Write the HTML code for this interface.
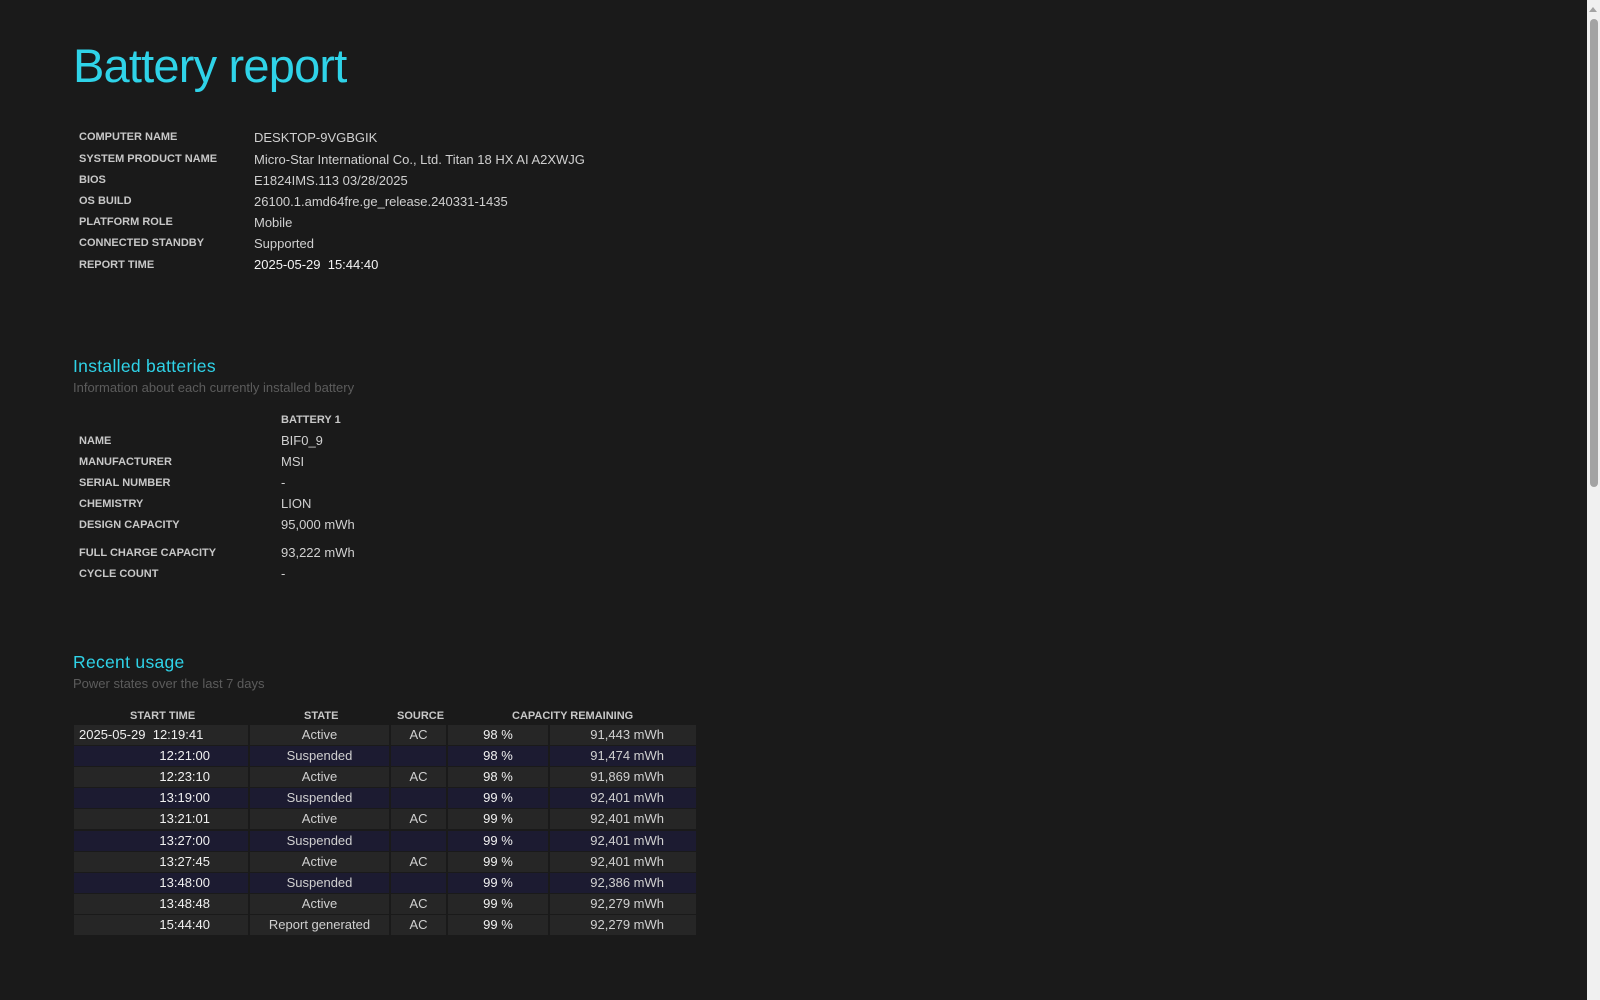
<!DOCTYPE html>
<html><head><meta charset="utf-8"><style>
html,body{margin:0;padding:0;background:#1a1a1a;width:1600px;height:1000px;overflow:hidden;font-family:"Liberation Sans","DejaVu Sans",sans-serif;color:#d8d8d8}
.abs{position:absolute;white-space:nowrap}
h1{position:absolute;left:73px;top:38px;margin:0;font-weight:normal;font-size:47px;color:#2fd3e8;letter-spacing:-0.8px}
.lbl{font-size:11px;font-weight:bold;color:#c8c8c8;text-transform:uppercase}
.val{font-size:13px;color:#d0d0d0}
h2{position:absolute;margin:0;font-weight:normal;font-size:17.5px;color:#2fd3e8;letter-spacing:0.3px}
.sub{font-size:13px;color:#5c5c5c}
.row{position:absolute;left:74px;width:622px;height:20px;font-size:13px;line-height:20px}
.row div{position:absolute;top:0;height:20px;white-space:nowrap;box-sizing:border-box}
.g div{background:#262626}
.n div{background:#1c1b31}
.c1{left:0;width:174px;text-align:right;padding-right:38px;color:#f0f0f0}
.c2{left:176px;width:139px;text-align:center;color:#d0d0d0}
.c3{left:317px;width:55px;text-align:center;color:#d0d0d0}
.c4{left:374px;width:100px;text-align:center;color:#f0f0f0}
.c5{left:476px;width:146px;text-align:right;padding-right:32px;color:#d0d0d0}
.sb{position:absolute;left:1587px;top:0;width:13px;height:1000px;background:#f0f0f0}
.th{position:absolute;left:1590px;top:19px;width:8px;height:468px;background:#a3a3a3;border-radius:4px}
.ar{position:absolute;left:1589px;top:7px;width:0;height:0;border-left:4.5px solid transparent;border-right:4.5px solid transparent;border-bottom:5px solid #a3a3a3}
</style></head><body>
<h1>Battery report</h1>

<div class="abs lbl" style="left:79px;top:131px">Computer name</div><div class="abs val" style="left:254px;top:130px">DESKTOP-9VGBGIK</div>
<div class="abs lbl" style="left:79px;top:153px">System product name</div><div class="abs val" style="left:254px;top:152px">Micro-Star International Co., Ltd. Titan 18 HX AI A2XWJG</div>
<div class="abs lbl" style="left:79px;top:174px">BIOS</div><div class="abs val" style="left:254px;top:173px">E1824IMS.113 03/28/2025</div>
<div class="abs lbl" style="left:79px;top:195px">OS build</div><div class="abs val" style="left:254px;top:194px">26100.1.amd64fre.ge_release.240331-1435</div>
<div class="abs lbl" style="left:79px;top:216px">Platform role</div><div class="abs val" style="left:254px;top:215px">Mobile</div>
<div class="abs lbl" style="left:79px;top:237px">Connected standby</div><div class="abs val" style="left:254px;top:236px">Supported</div>
<div class="abs lbl" style="left:79px;top:259px">Report time</div><div class="abs val" style="left:254px;top:257px;color:#f4f4f4">2025-05-29&nbsp; 15:44:40</div>

<h2 style="left:73px;top:356px">Installed batteries</h2>
<div class="abs sub" style="left:73px;top:380px">Information about each currently installed battery</div>
<div class="abs lbl" style="left:281px;top:414px">Battery 1</div>
<div class="abs lbl" style="left:79px;top:435px">Name</div><div class="abs val" style="left:281px;top:433px">BIF0_9</div>
<div class="abs lbl" style="left:79px;top:456px">Manufacturer</div><div class="abs val" style="left:281px;top:454px">MSI</div>
<div class="abs lbl" style="left:79px;top:477px">Serial number</div><div class="abs val" style="left:281px;top:475px">-</div>
<div class="abs lbl" style="left:79px;top:498px">Chemistry</div><div class="abs val" style="left:281px;top:496px">LION</div>
<div class="abs lbl" style="left:79px;top:519px">Design capacity</div><div class="abs val" style="left:281px;top:517px">95,000 mWh</div>
<div class="abs lbl" style="left:79px;top:547px">Full charge capacity</div><div class="abs val" style="left:281px;top:545px">93,222 mWh</div>
<div class="abs lbl" style="left:79px;top:568px">Cycle count</div><div class="abs val" style="left:281px;top:566px">-</div>

<h2 style="left:73px;top:652px">Recent usage</h2>
<div class="abs sub" style="left:73px;top:676px">Power states over the last 7 days</div>
<div class="abs lbl" style="left:130px;top:710px">Start time</div>
<div class="abs lbl" style="left:304px;top:710px">State</div>
<div class="abs lbl" style="left:397px;top:710px">Source</div>
<div class="abs lbl" style="left:512px;top:710px">Capacity remaining</div>

<div class="row g" style="top:725px"><div class="c1" style="text-align:left;padding-left:5px">2025-05-29&nbsp; 12:19:41</div><div class="c2">Active</div><div class="c3">AC</div><div class="c4">98 %</div><div class="c5">91,443 mWh</div></div>
<div class="row n" style="top:746px"><div class="c1">12:21:00</div><div class="c2">Suspended</div><div class="c3"></div><div class="c4">98 %</div><div class="c5">91,474 mWh</div></div>
<div class="row g" style="top:767px"><div class="c1">12:23:10</div><div class="c2">Active</div><div class="c3">AC</div><div class="c4">98 %</div><div class="c5">91,869 mWh</div></div>
<div class="row n" style="top:788px"><div class="c1">13:19:00</div><div class="c2">Suspended</div><div class="c3"></div><div class="c4">99 %</div><div class="c5">92,401 mWh</div></div>
<div class="row g" style="top:809px"><div class="c1">13:21:01</div><div class="c2">Active</div><div class="c3">AC</div><div class="c4">99 %</div><div class="c5">92,401 mWh</div></div>
<div class="row n" style="top:831px"><div class="c1">13:27:00</div><div class="c2">Suspended</div><div class="c3"></div><div class="c4">99 %</div><div class="c5">92,401 mWh</div></div>
<div class="row g" style="top:852px"><div class="c1">13:27:45</div><div class="c2">Active</div><div class="c3">AC</div><div class="c4">99 %</div><div class="c5">92,401 mWh</div></div>
<div class="row n" style="top:873px"><div class="c1">13:48:00</div><div class="c2">Suspended</div><div class="c3"></div><div class="c4">99 %</div><div class="c5">92,386 mWh</div></div>
<div class="row g" style="top:894px"><div class="c1">13:48:48</div><div class="c2">Active</div><div class="c3">AC</div><div class="c4">99 %</div><div class="c5">92,279 mWh</div></div>
<div class="row g" style="top:915px"><div class="c1">15:44:40</div><div class="c2">Report generated</div><div class="c3">AC</div><div class="c4">99 %</div><div class="c5">92,279 mWh</div></div>

<div class="sb"></div><div class="ar"></div><div class="th"></div>
</body></html>
